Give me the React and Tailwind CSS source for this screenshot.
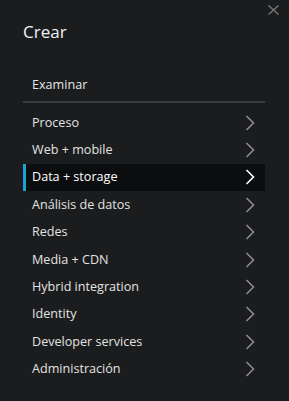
import React from "react";

const items = [
  "Proceso",
  "Web + mobile",
  "Data + storage",
  "Análisis de datos",
  "Redes",
  "Media + CDN",
  "Hybrid integration",
  "Identity",
  "Developer services",
  "Administración",
];

function Chevron({ active }) {
  return (
    <svg width="10" height="16" viewBox="0 0 10 16" className="shrink-0">
      <polyline
        points="1.5,1 8.5,8 1.5,15"
        fill="none"
        stroke={active ? "#ffffff" : "#8c8c8c"}
        strokeWidth="1.6"
      />
    </svg>
  );
}

export default function App() {
  return (
    <div
      className="relative w-[289px] h-[401px] bg-[#1b1c1e] overflow-hidden"
      style={{ fontFamily: '"Open Sans", "Noto Sans", sans-serif' }}
    >
      <button className="absolute right-[10px] top-[5px] w-[11px] h-[10px]">
        <svg width="11" height="10" viewBox="0 0 11 10">
          <path d="M0.5 0.5 L10.5 9.5 M10.5 0.5 L0.5 9.5" stroke="#777" strokeWidth="1.4" />
        </svg>
      </button>
      <div className="flex flex-col px-[23px] pt-[20px]">
        <div className="text-[17px] leading-[24px] text-[#f2f2f2]">Crear</div>
        <div className="mt-[32px] pl-[9px] text-[12.6px] leading-[18px] text-[#e6e6e6] pb-[7px] border-b-2 border-[#3a3b3e] w-[242px]">
          Examinar
        </div>
        <div className="mt-[6px] flex flex-col w-[242px]">
          {items.map((it) => {
            const active = it === "Data + storage";
            return (
              <div
                key={it}
                className={
                  "flex items-center justify-between h-[27.4px] pr-[10px] " +
                  (active
                    ? "bg-[#0c0d0f] border-l-[3px] border-[#1aa3d9] pl-[6px] text-white"
                    : "pl-[9px] text-[#e3e3e3]")
                }
              >
                <span className="text-[12.6px] leading-[18px]">{it}</span>
                <Chevron active={active} />
              </div>
            );
          })}
        </div>
      </div>
    </div>
  );
}
